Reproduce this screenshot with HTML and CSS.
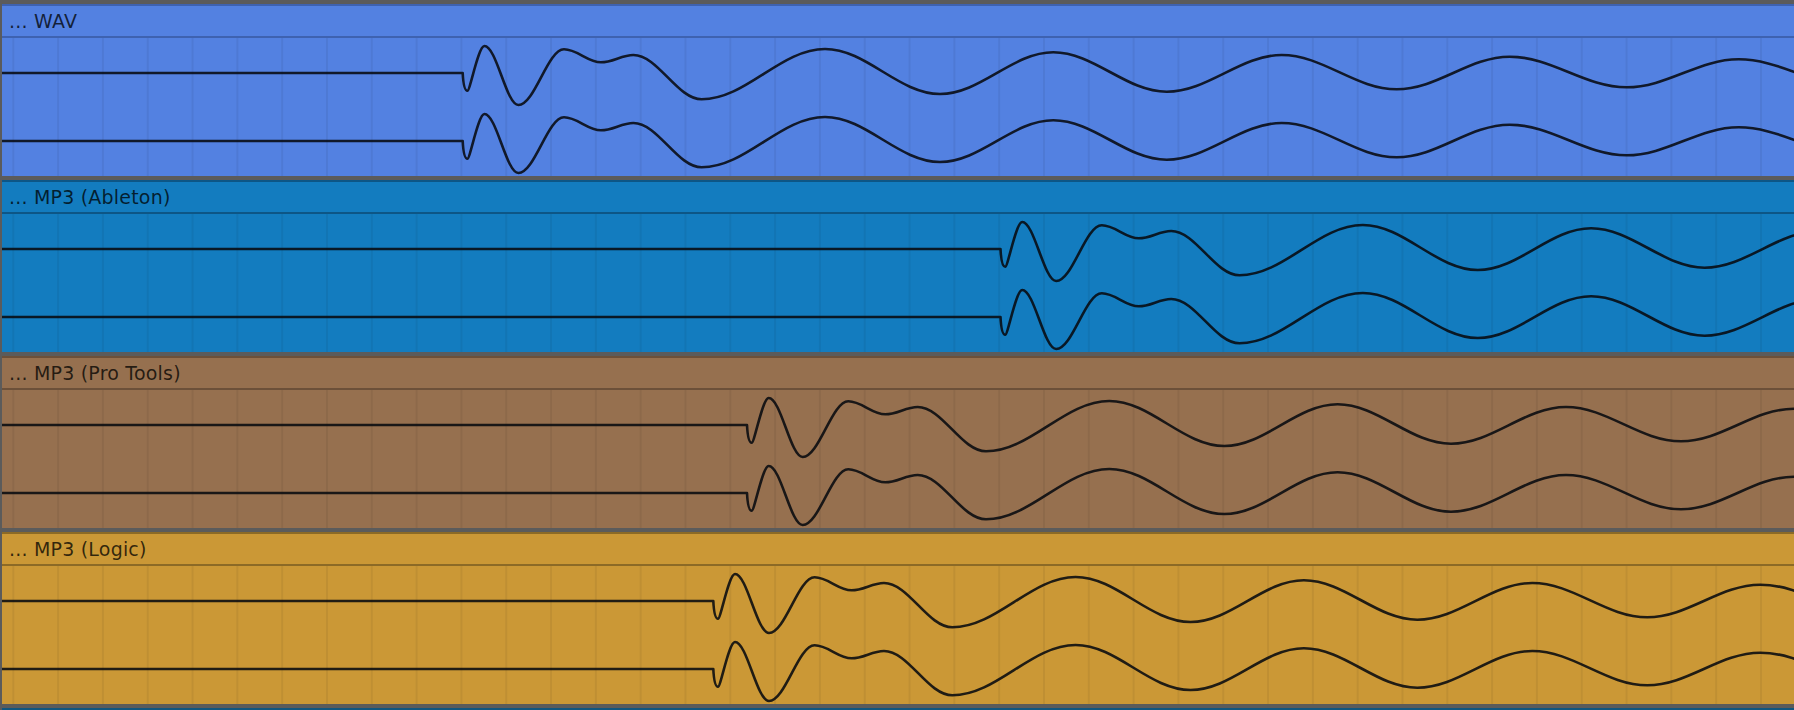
FILE: index.html
```html
<!DOCTYPE html>
<html lang="en">
<head>
    <meta charset="UTF-8">
    <meta name="viewport" content="width=device-width, initial-scale=1.0">
    <title>Clip comparison</title>
    <link rel="stylesheet" href="styles.css">
</head>
<body>

    <!-- shared waveform, drawn relative to its onset (0,0) -->
    <svg class="defs" aria-hidden="true">
        <defs>
            <path id="wave" d="M -1200 0 H 0
                C 0.5 10 1.5 17.7 4.7 17.7
                C 7.5 17.7 15.5 -27 21.7 -27
                C 33.9 -27 43.5 32 55.7 32
                C 72.1 32 84.9 -23.7 101.3 -23.7
                C 114.6 -23.7 125 -10.7 138.3 -10.7
                C 150 -10.7 159 -18 170.7 -18
                C 195.3 -18 214.4 26.3 239 26.3
                C 283.4 26.3 317.9 -24 362.3 -24
                C 403.7 -24 435.9 21 477.3 21
                C 518.1 21 549.8 -20.7 590.6 -20.7
                C 631.4 -20.7 663.2 18.7 704 18.7
                C 745.4 18.7 777.6 -18 819 -18
                C 860.4 -18 892.6 16.3 934 16.3
                C 974.7 16.3 1006.3 -16.3 1047 -16.3
                C 1089.1 -16.3 1121.9 14.3 1164 14.3
                C 1204.3 14.3 1235.7 -13.7 1276 -13.7
                C 1317 -13.7 1349 12.5 1390 12.5
                C 1431 12.5 1463 -12 1504 -12"/>
        </defs>
    </svg>

    <main class="arrangement">

        <section class="clip clip-wav">
            <div class="clip-title">... WAV</div>
            <div class="clip-lane">
                <svg class="wave" width="1792" height="138">
                    <use href="#wave" transform="translate(460.7 35)"/>
                    <use href="#wave" transform="translate(460.7 103)"/>
                </svg>
            </div>
        </section>

        <section class="clip clip-ableton">
            <div class="clip-title">... MP3 (Ableton)</div>
            <div class="clip-lane">
                <svg class="wave" width="1792" height="138">
                    <use href="#wave" transform="translate(998.5 35)"/>
                    <use href="#wave" transform="translate(998.5 103)"/>
                </svg>
            </div>
        </section>

        <section class="clip clip-protools">
            <div class="clip-title">... MP3 (Pro Tools)</div>
            <div class="clip-lane">
                <svg class="wave" width="1792" height="138">
                    <use href="#wave" transform="translate(745 35)"/>
                    <use href="#wave" transform="translate(745 103)"/>
                </svg>
            </div>
        </section>

        <section class="clip clip-logic">
            <div class="clip-title">... MP3 (Logic)</div>
            <div class="clip-lane">
                <svg class="wave" width="1792" height="138">
                    <use href="#wave" transform="translate(711.3 35)"/>
                    <use href="#wave" transform="translate(711.3 103)"/>
                </svg>
            </div>
        </section>

        <!-- next clip, only its top edge is in view -->
        <section class="clip clip-next"></section>

    </main>

</body>
</html>
```

FILE: styles.css
```css
body {
    margin: 0;
    background-color: #5b5b5b;
    font-family: "DejaVu Sans", "Liberation Sans", sans-serif;
    overflow: hidden;
}
.defs {
    display: block;
    width: 0;
    height: 0;
}
.arrangement {
    display: flex;
    flex-direction: column;
    gap: 4px;
    height: 710px;
    padding: 4px 0 0 2px;
    box-sizing: border-box;
}
.clip {
    flex: none;
    border-top: 2px solid var(--edge);
    background-color: var(--fill);
}
.clip-title {
    height: 30px;
    line-height: 31px;
    padding-left: 7px;
    border-bottom: 2px solid var(--edge);
    font-size: 19px;
    letter-spacing: 0.2px;
    color: rgba(0, 0, 0, 0.76);
    white-space: nowrap;
}
.clip-lane {
    height: 138px;
    background-image: linear-gradient(to right, var(--grid) 0, var(--grid) 1.5px, transparent 1.5px);
    background-size: 44.82px 100%;
    background-position: 10.3px 0;
    background-repeat: repeat-x;
}
.wave {
    display: block;
}
.wave use {
    fill: none;
    stroke: rgba(8, 10, 16, 0.88);
    stroke-width: 2.6;
    stroke-linejoin: round;
}

/* clip colours */
.clip-wav {
    --fill: #5381e1;
    --edge: #3e62b0;
    --grid: rgba(0, 0, 0, 0.06);
}
.clip-ableton {
    --fill: #137cbf;
    --edge: #0d5686;
    --grid: rgba(0, 0, 0, 0.06);
}
.clip-protools {
    --fill: #96704f;
    --edge: #6c5039;
    --grid: rgba(0, 0, 0, 0.06);
}
.clip-logic {
    --fill: #cb9836;
    --edge: #8c6a26;
    --grid: rgba(0, 0, 0, 0.06);
}
.clip-next {
    --fill: #137cbf;
    --edge: #11567f;
    height: 20px;
}
```
